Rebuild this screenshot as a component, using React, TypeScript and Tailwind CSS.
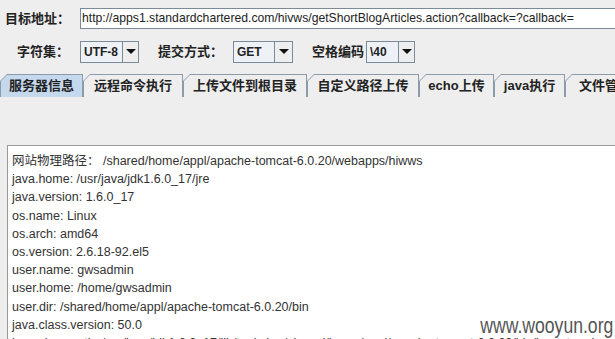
import React from "react";

const cjk = { fontFamily: '"Liberation Sans", "Noto Sans CJK SC", sans-serif' };

function Combo({ value, w, split }: { value: string; w: number; split: number }) {
  return (
    <div
      className="flex h-[22px] border border-[#7a8a99] bg-[#eef2f7]"
      style={{ width: w }}
    >
      <div
        className="flex items-center pl-[3px] text-[12px] font-bold text-[#222]"
        style={{ width: split }}
      >
        {value}
      </div>
      <div className="flex flex-1 items-center justify-center border-l border-[#7a8a99] bg-[#eeeeee]">
        <svg width="10" height="6" viewBox="0 0 10 6">
          <path d="M0 0 H10 L5 5 Z" fill="#111" />
        </svg>
      </div>
    </div>
  );
}

function Tab({ label, w, selected }: { label: string; w: number; selected?: boolean }) {
  return (
    <div
      className="h-[23px] shrink-0 bg-[#8d9aa8] pt-px pl-px pr-px"
      style={{
        width: w,
        clipPath: "polygon(7px 0, 100% 0, 100% 100%, 0 100%, 0 7px)",
      }}
    >
      <div
        className={
          "flex h-full items-center justify-center text-[13px] font-bold text-[#222] " +
          (selected ? "bg-[#c4d8ee]" : "bg-[#eeeeee]")
        }
        style={{ clipPath: "polygon(6px 0, 100% 0, 100% 100%, 0 100%, 0 6px)" }}
      >
        {label}
      </div>
    </div>
  );
}

const lines = [
  "java.home: /usr/java/jdk1.6.0_17/jre",
  "java.version: 1.6.0_17",
  "os.name: Linux",
  "os.arch: amd64",
  "os.version: 2.6.18-92.el5",
  "user.name: gwsadmin",
  "user.home: /home/gwsadmin",
  "user.dir: /shared/home/appl/apache-tomcat-6.0.20/bin",
  "java.class.version: 50.0",
  "java.class.path: /usr/java/jdk1.6.0_17/lib/tools.jar:/shared/home/appl/apache-tomcat-6.0.20/bin/bootstrap.jar",
];

export default function App() {
  return (
    <div
      className="relative flex h-[339px] w-[615px] flex-col overflow-hidden bg-[#eeeeee]"
      style={cjk}
    >
      {/* Row 1 */}
      <div className="flex h-[21px] items-center mt-[8px]">
        <div className="w-[75px] pl-[5px] text-[13px] font-bold text-[#222]">目标地址：</div>
        <div className="flex h-[21px] flex-1 items-center border border-[#7a8a99] bg-white pl-[1px] text-[12.2px] text-[#222] ml-[5px] -mr-[4px] whitespace-nowrap">
          http://apps1.standardchartered.com/hivws/getShortBlogArticles.action?callback=?callback=
        </div>
      </div>

      {/* Row 2 */}
      <div className="mt-[12px] flex h-[22px] items-center">
        <div className="ml-[17px] w-[63px] text-[13px] font-bold text-[#222]">字符集：</div>
        <Combo value="UTF-8" w={59} split={41} />
        <div className="ml-[19px] w-[75px] text-[13px] font-bold text-[#222]">提交方式：</div>
        <Combo value="GET" w={60} split={40} />
        <div className="ml-[19px] w-[54px] text-[13px] font-bold text-[#222]">空格编码</div>
        <Combo value="\40" w={49} split={31} />
      </div>

      {/* Tabs */}
      <div className="mt-[11px] flex h-[23px] items-end">
        <Tab label="服务器信息" w={83} selected />
        <Tab label="远程命令执行" w={100} />
        <Tab label="上传文件到根目录" w={124} />
        <Tab label="自定义路径上传" w={112} />
        <Tab label="echo上传" w={75} />
        <Tab label="java执行" w={71} />
        <Tab label="文件管理" w={80} />
      </div>
      <div className="h-[3px] bg-[#c4d8ee]" />

      {/* Content */}
      <div className="flex flex-1 flex-col bg-[#eeeeee] pt-[48px] pl-[7px]">
        <div className="flex-1 border-t border-l border-[#9a9a9a] bg-white pt-[6px] pl-[4px] text-[12.5px] leading-[18.2px] text-[#333] whitespace-nowrap">
          <div>
            <span className="text-[12.5px]">网站物理路径：</span>
            <span> /shared/home/appl/apache-tomcat-6.0.20/webapps/hiwws</span>
          </div>
          {lines.map((l) => (
            <div key={l}>{l}</div>
          ))}
        </div>
      </div>

      {/* Watermark */}
      <div
        className="absolute right-[2px] bottom-[2px] origin-right scale-x-[0.8] text-[22px] leading-none text-[#555]"
        style={{ fontFamily: '"Liberation Sans", Arial, sans-serif' }}
      >
        www.wooyun.org
      </div>
    </div>
  );
}
